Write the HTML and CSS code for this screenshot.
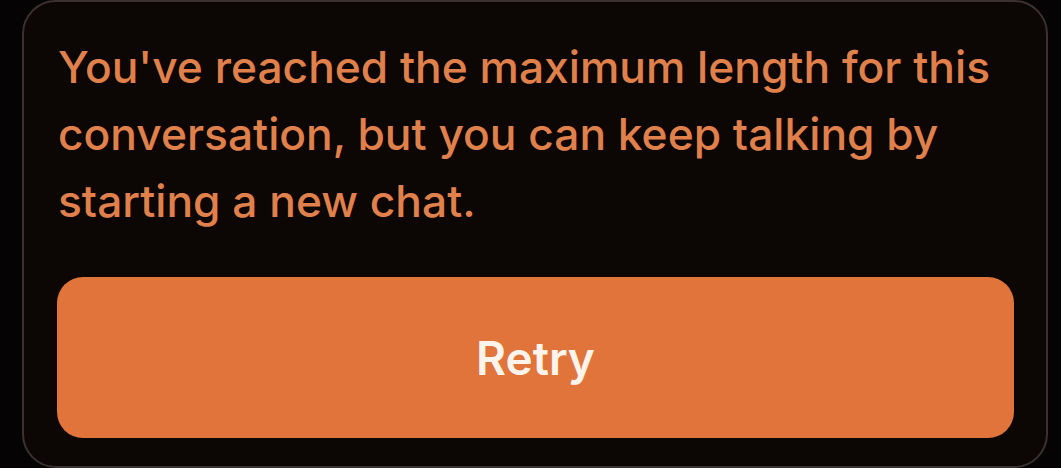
FILE: index.html
```html
<!DOCTYPE html>
<html>
<head>
<meta charset="utf-8">
<link rel="stylesheet" href="styles.css">
</head>
<body>
<div class="card">
  <p class="msg">You've reached the maximum length for this conversation, but you can keep talking by starting a new chat.</p>
  <div class="btn">Retry</div>
</div>
</body>
</html>
```

FILE: styles.css
```css
html, body {
  margin: 0;
  padding: 0;
  background: #050303;
  width: 1061px;
  height: 468px;
  overflow: hidden;
}
.card {
  box-sizing: border-box;
  margin-left: 22px;
  width: 1026px;
  height: 468px;
  background: #0c0605;
  border: 2px solid #3a3130;
  border-radius: 34px;
  padding: 32px 32px 28px 33px;
  display: flex;
  flex-direction: column;
}
.msg {
  margin: 0 0 0 1px;
  font-family: Inter, "Liberation Sans", sans-serif;
  font-size: 44.3px;
  font-weight: 500;
  line-height: 67px;
  color: #e0804b;
  width: 960px;
}
.btn {
  margin-top: 42px;
  height: 161px;
  border-radius: 26px;
  background: #e0743a;
  display: flex;
  align-items: center;
  justify-content: center;
  font-family: Inter, "Liberation Sans", sans-serif;
  font-weight: 600;
  font-size: 46px;
  color: #fff4ec;
}
```
